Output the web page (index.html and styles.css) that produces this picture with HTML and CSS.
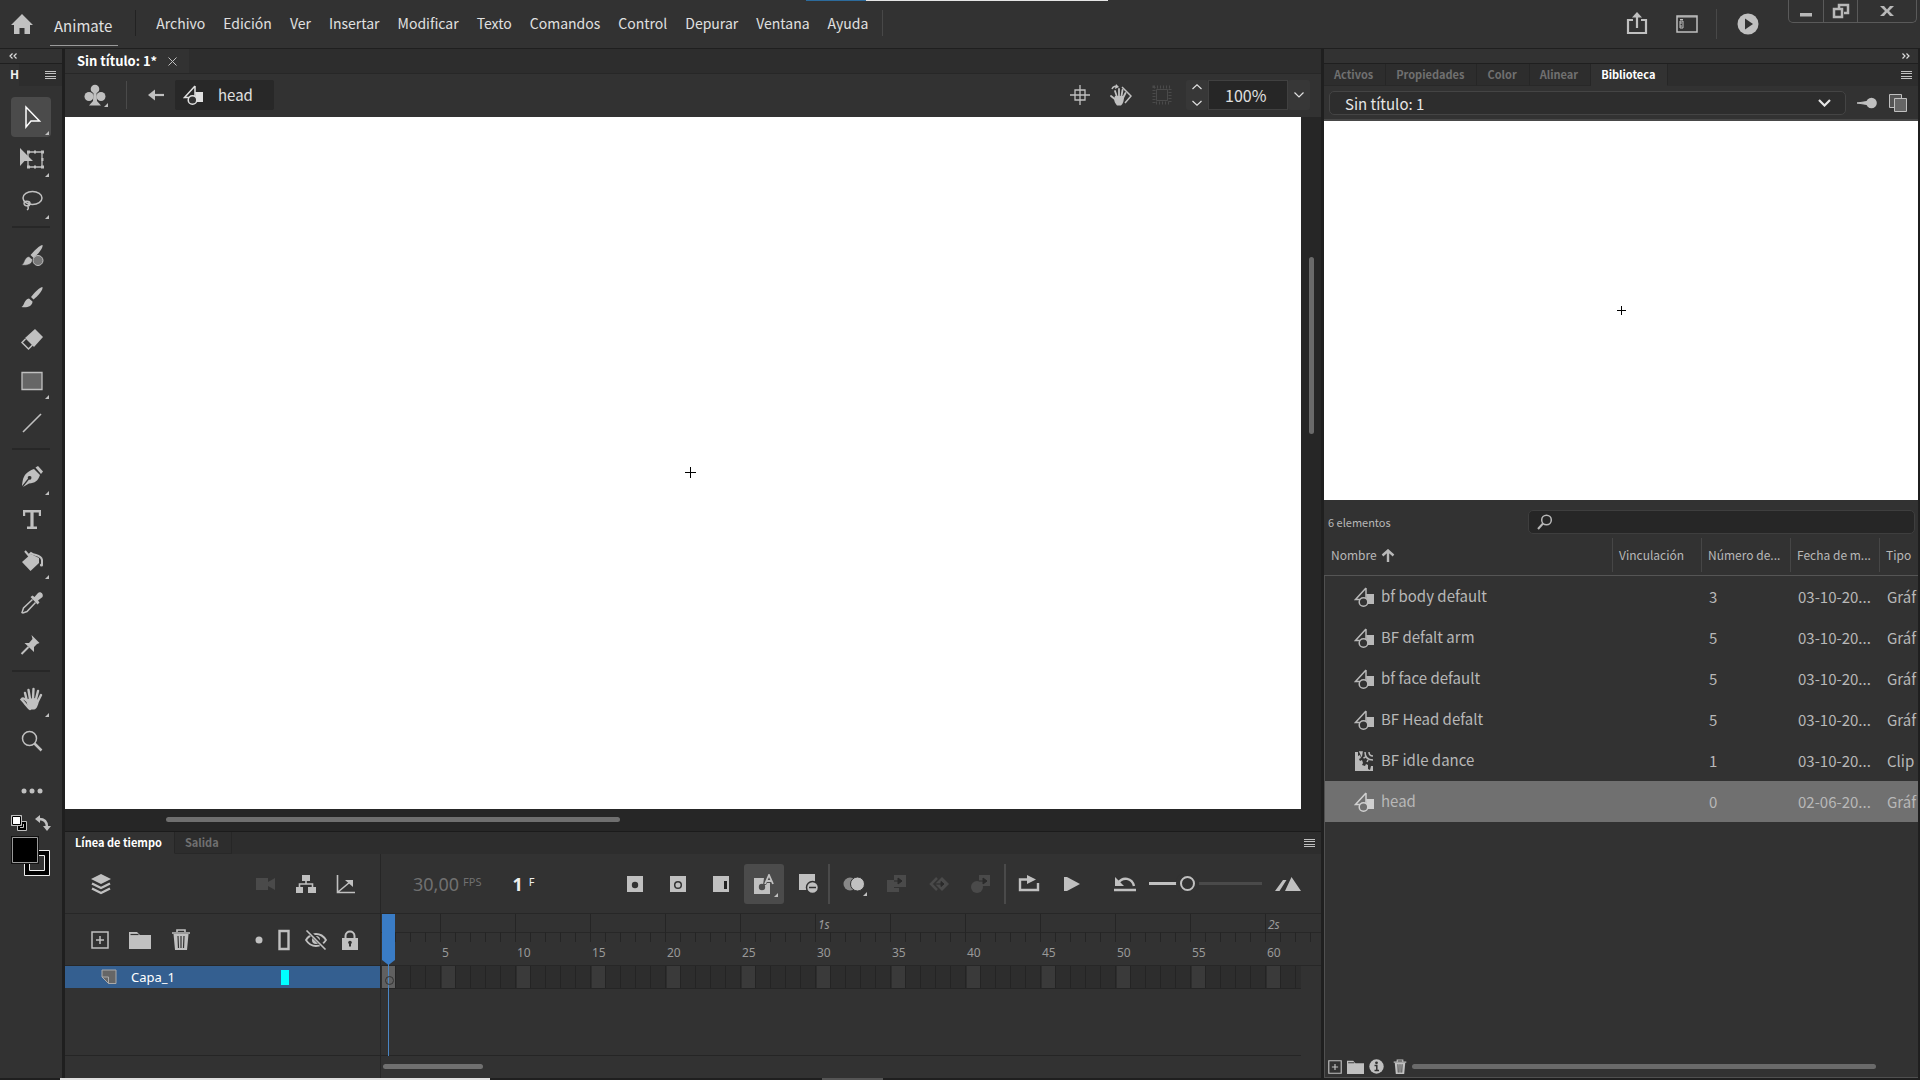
FILE: index.html
```html
<!DOCTYPE html>
<html lang="es">
<head>
    <meta charset="UTF-8">
    <meta name="viewport" content="width=device-width, initial-scale=1.0">
    <title>Animate - Sin título: 1*</title>
    <link rel="stylesheet" href="styles.css">
</head>
<body>
    <!-- shared icons -->
    <svg class="symbols" width="0" height="0" aria-hidden="true">
        <symbol id="i-graphic" viewBox="0 0 20 22">
            <path d="M12 2v11M12 2L1.500 13.500H6" fill="none" stroke="currentColor" stroke-width="1.500"/>
            <path d="M12 8h8v10h-6.500z" fill="currentColor"/>
            <circle class="hole" cx="9.500" cy="16" r="4.300" stroke="currentColor" stroke-width="1.500"/>
        </symbol>
        <symbol id="i-clip" viewBox="0 0 20 22">
            <path d="M1 2h3v4l2-1 1 3-2 1 1 2 2-1 1 3-1 2 3 1 1-2 2 1v4l2 1 1-4h2v5H1z" fill="currentColor"/>
            <path d="M6 2h2l-.5 3zM11 2c0 5 2 8 8 8M11.500 7l-2 1M14 10l-1 2M15 2c0 3 1 4 4 4" fill="none" stroke="currentColor" stroke-width="1.500"/>
        </symbol>
        <symbol id="i-menu" viewBox="0 0 11 8">
            <path d="M0 .5h11M0 2.500h11M0 5.500h11M0 7.500h11" stroke="currentColor"/>
        </symbol>
        <symbol id="i-add" viewBox="0 0 18 18">
            <path d="M1 1h16v16H1zM9 5v8M5 9h8" fill="none" stroke="currentColor" stroke-width="1.500"/>
        </symbol>
        <symbol id="i-folder" viewBox="0 0 22 18">
            <path d="M0 4V1h8l3 3h11v14H0z" fill="currentColor"/>
            <path d="M1.500 3.500h8" stroke="#323232" stroke-width="1.200"/>
        </symbol>
        <symbol id="i-trash" viewBox="0 0 20 22">
            <path d="M6 3V1h8v2M1 4h18" fill="none" stroke="currentColor" stroke-width="1.600"/>
            <path d="M2.500 5h15l-1.500 16H4z" fill="currentColor"/>
            <path d="M7 7l.5 12M10 7v12M13 7l-.5 12" stroke="#323232" stroke-width="1.200"/>
        </symbol>
    </svg>

    <div class="app">
        <header class="topbar">
            <span class="desktop-strip"></span>
            <button class="icon-btn home" aria-label="Inicio">
                <svg width="24" height="22" viewBox="0 0 24 22"><path d="M12 1l11 11h-3v9h-5.500v-6h-5v6H4v-9H1z" fill="currentColor"/></svg>
            </button>
            <a class="brand" href="#">Animate</a>
            <nav class="menu">
                <a href="#">Archivo</a>
                <a href="#">Edición</a>
                <a href="#">Ver</a>
                <a href="#">Insertar</a>
                <a href="#">Modificar</a>
                <a href="#">Texto</a>
                <a href="#">Comandos</a>
                <a href="#">Control</a>
                <a href="#">Depurar</a>
                <a href="#">Ventana</a>
                <a href="#">Ayuda</a>
            </nav>
            <div class="quick">
                <button class="icon-btn" aria-label="Compartir">
                    <svg width="22" height="24" viewBox="0 0 22 24"><path d="M7 8H2v13h18V8h-5M11 16V4" fill="none" stroke="currentColor" stroke-width="2.200"/><path d="M11 0l5 5.500H6z" fill="currentColor"/></svg>
                </button>
                <button class="icon-btn workspace" aria-label="Espacio de trabajo">
                    <svg width="22" height="18" viewBox="0 0 22 18"><path d="M1 1h20v16H1z" fill="none" stroke="currentColor" stroke-width="1.500"/><path d="M1 2h20M4 4.500h3M4 6h3v7H4zM4 8h2M4 11h2" fill="none" stroke="currentColor"/></svg>
                </button>
                <button class="icon-btn test" aria-label="Probar película">
                    <svg width="22" height="22" viewBox="0 0 22 22"><circle cx="11" cy="11" r="10.500" fill="currentColor"/><path d="M8 5.500v11l8-5.500z" fill="#323232"/></svg>
                </button>
            </div>
            <div class="window-controls">
                <button aria-label="Minimizar"><svg width="14" height="12" viewBox="0 0 14 12"><path d="M1 8h12v3.500H1z" fill="currentColor"/></svg></button>
                <button aria-label="Restaurar"><svg width="18" height="16" viewBox="0 0 18 16"><path d="M7 5V2h9v8h-4M2 6h8v8H2z" fill="none" stroke="currentColor" stroke-width="2.500"/></svg></button>
                <button class="close" aria-label="Cerrar"><svg width="14" height="12" viewBox="0 0 14 12"><path d="M0 1h4l3 3.500L10 1h4L9 6l5 5h-4L7 7.500 4 11H0l5-5z" fill="currentColor"/></svg></button>
            </div>
        </header>

        <aside class="tools">
            <div class="dock-bar">
                <svg width="8" height="6" viewBox="0 0 8 6"><path d="M3.500 .5L1 3l2.500 2.500M7.500 .5L5 3l2.500 2.500" fill="none" stroke="currentColor" stroke-width="1.200"/></svg>
            </div>
            <div class="tools-tab"><b>H</b><span><svg class="ic-menu"><use href="#i-menu"/></svg></span></div>
            <div class="tool-list">
                <button class="tool more active" aria-label="Selección"><svg viewBox="0 0 24 24"><path d="M6 2v20l5-6h8.500z" fill="none" stroke="#fff" stroke-width="1.500"/></svg></button>
                <button class="tool more" aria-label="Transformación libre"><svg viewBox="0 0 24 24"><path d="M8 5h14v15H8z" fill="none" stroke="currentColor" stroke-width="1.300"/><path d="M14 3.500h2v3h-2zM21 3.500h3v3h-3zM21 18.500h3v3h-3zM14 18.500h2v3h-2zM7 18.500h3v3H7zM21.500 11h2v3h-2zM7 3.500h3v3H7z" fill="currentColor"/><path d="M0 1v18l4.500-5H13z" fill="currentColor"/></svg></button>
                <button class="tool more" aria-label="Lazo"><svg viewBox="0 0 24 24"><ellipse cx="12.500" cy="9" rx="9.500" ry="6.500" fill="none" stroke="currentColor" stroke-width="1.500"/><path d="M4 14c1-3 6-2 5 1s-5 2-5-1 6-2 6 0-1 3-2 3 2 2-1 4" fill="none" stroke="currentColor" stroke-width="1.400"/></svg></button>
                <hr>
                <button class="tool" aria-label="Pincel fluido"><svg viewBox="0 0 24 24"><circle cx="18" cy="17.500" r="5" fill="#777" stroke="currentColor"/><path d="M22.500 2c.8 3-4.500 9-9 13l-3-3C14 8 20 2 22.500 2z" fill="currentColor"/><path d="M9 13.500l3.500 3c0 5-6 6.500-11 5.500 3-1 2.500-8 7.500-8.500z" fill="currentColor" stroke="#323232" stroke-width=".6"/></svg></button>
                <button class="tool" aria-label="Pincel clásico"><svg viewBox="0 0 24 24"><path d="M22.500 2c.8 3-4.500 9-9 12.500l-2.500-2.500C14 8 20 2 22.500 2z" fill="currentColor"/><path d="M9 13.500l3.500 3c0 5-6 6.500-11 5.500 3-1 2.500-8 7.500-8.500z" fill="currentColor"/></svg></button>
                <button class="tool" aria-label="Borrador"><svg viewBox="0 0 24 24"><path d="M15 2l8 8-9 10-9-9z" fill="currentColor"/><path d="M5.500 12L2 15.500 8.500 22l4-4" fill="none" stroke="currentColor" stroke-width="1.500"/></svg></button>
                <button class="tool more" aria-label="Rectángulo"><svg viewBox="0 0 24 24"><path d="M2 3.500h20v17H2z" fill="#666" stroke="currentColor" stroke-width="1.300"/></svg></button>
                <button class="tool" aria-label="Línea"><svg viewBox="0 0 24 24"><path d="M3 21L21 3" stroke="currentColor" stroke-width="1.600"/></svg></button>
                <hr>
                <button class="tool more" aria-label="Pluma"><svg viewBox="0 0 24 24"><path d="M15.500 2.500L18 1l5 5.500L21 9z" fill="currentColor"/><path d="M14 4l6 6c-2 6-5 8-11 8.500L3 22l6-7.500a1.800 1.800 0 1 0-1-1L2 21c1-5 0-13 12-17z" fill="currentColor"/></svg></button>
                <button class="tool" aria-label="Texto"><svg viewBox="0 0 24 24"><path d="M3 3h18v6h-2.200V5.500h-5.200v14H17V22H7v-2.500h3.400v-14H5.200V9H3z" fill="currentColor"/></svg></button>
                <button class="tool more" aria-label="Cubo de pintura"><svg viewBox="0 0 24 24"><path d="M2 13L11 5l8 4v5l-8.500 8z" fill="currentColor"/><path d="M5 2l5 6M9 6l2-2c4 3 10 1 11 7v5" fill="none" stroke="currentColor" stroke-width="2"/><circle cx="21.500" cy="16" r="1.600" fill="currentColor"/></svg></button>
                <button class="tool" aria-label="Cuentagotas"><svg viewBox="0 0 24 24"><path d="M12.500 8.500L3.500 17 2 21.500l1 .5 4-1.500 8.500-9" fill="none" stroke="currentColor" stroke-width="1.500"/><path d="M10.500 6l2-1.500 2 1.500L18 2c2.500-2 6 1 4.500 4L18 9.500l1.500 2-2 2z" fill="currentColor"/></svg></button>
                <button class="tool" aria-label="Deformación de posición libre"><svg viewBox="0 0 24 24"><path d="M11.500 2l8 8-2.500 1-3 3v5L4.500 10h4.500l3.500-4z" fill="currentColor"/><path d="M8.500 14L1.500 21" stroke="currentColor" stroke-width="2"/></svg></button>
                <hr>
                <button class="tool more" aria-label="Mano"><svg viewBox="0 0 24 24"><path d="M10 22c-2-1-5-6-8.500-9.500C3 10.500 5 12 7 14L5 6M10 12L8.500 3M13 12l.5-10M16 12l2-8M18 14l3-6" fill="none" stroke="currentColor" stroke-width="2.400" stroke-linecap="round"/><path d="M7 12l9-1 3 3c-1 4-2 8-5 8.500h-4C8 20 6 17 7 12z" fill="currentColor"/></svg></button>
                <button class="tool" aria-label="Zoom"><svg viewBox="0 0 24 24"><circle cx="9.500" cy="9.500" r="7" fill="none" stroke="currentColor" stroke-width="1.500"/><path d="M14.500 14.500l7 7" stroke="currentColor" stroke-width="2.500"/></svg></button>
                <button class="tool dots" aria-label="Editar barra de herramientas"><svg viewBox="0 0 24 24"><g fill="currentColor"><circle cx="4" cy="12" r="2.500"/><circle cx="12" cy="12" r="2.500"/><circle cx="20" cy="12" r="2.500"/></g></svg></button>
            </div>
            <div class="swatches">
                <button class="icon-btn" aria-label="Blanco y negro"><svg width="16" height="16" viewBox="0 0 16 16"><path d="M6.500 6.500h9v9h-9z" fill="#000" stroke="#c0c0c0"/><path d="M9 12.500h3.500V9" fill="none" stroke="#c0c0c0"/><path d="M.5 .5h10v10H.5z" fill="#fff" stroke="#c0c0c0"/><path d="M1.500 1.500h8v8h-8z" fill="none" stroke="#000"/></svg></button>
                <button class="icon-btn" aria-label="Intercambiar colores"><svg width="16" height="16" viewBox="0 0 16 16"><path d="M4 4c6 0 8 3 8 8" fill="none" stroke="currentColor" stroke-width="2.500"/><path d="M0 4l5-4v8zM8 11h8l-4 5z" fill="currentColor"/></svg></button>
                <button class="icon-btn colors" aria-label="Color de trazo y relleno"><svg width="40" height="42" viewBox="0 0 40 42"><path d="M13.500 14.500h25v25h-25z" fill="#000" stroke="#eee"/><path d="M18.500 19.500h15v15h-15z" fill="#323232" stroke="#eee"/><path d="M0 0h28v28H0z" fill="#111"/><path d="M1.500 1.500h25v25h-25z" fill="#000" stroke="#999"/></svg></button>
            </div>
        </aside>

        <main class="document">
            <div class="doc-tabs">
                <div class="doc-tab">Sin título: 1* <button class="icon-btn" aria-label="Cerrar documento"><svg width="9" height="9" viewBox="0 0 9 9"><path d="M.5 .5l8 8M8.500 .5l-8 8" stroke="currentColor"/></svg></button></div>
            </div>
            <div class="edit-bar">
                <button class="icon-btn symbol-btn more" aria-label="Editar símbolos"><svg width="22" height="22" viewBox="0 0 22 22"><g fill="currentColor"><circle cx="11" cy="5" r="4.300"/><circle cx="5" cy="12.500" r="4.500"/><circle cx="17" cy="12.500" r="4.500"/><path d="M9.500 9h3l.5 8 4 4.500H5L9 17z"/></g></svg></button>
                <button class="icon-btn back" aria-label="Atrás"><svg width="16" height="12" viewBox="0 0 16 12"><path d="M4 6h12" stroke="currentColor" stroke-width="2.200"/><path d="M0 6l7-5.500v11z" fill="currentColor"/></svg></button>
                <a class="crumb" href="#"><svg class="ic-symbol"><use href="#i-graphic"/></svg>head</a>
                <div class="view-tools">
                    <button class="icon-btn" aria-label="Centrar escenario"><svg width="20" height="20" viewBox="0 0 20 20"><path d="M5 5h10v10H5zM10 0v20M0 10h20" fill="none" stroke="currentColor" stroke-width="1.300"/></svg></button>
                    <button class="icon-btn" aria-label="Herramienta de rotación"><svg width="22" height="22" viewBox="0 0 22 22"><path d="M2 5c1-3 4-3 5-2" fill="none" stroke="currentColor" stroke-width="1.500"/><path d="M6 0l3 3-4 2z" fill="currentColor"/><path d="M12 3l9 9-6 7" fill="none" stroke="currentColor" stroke-width="1.500"/><path d="M7 13L5 7M9 12V5M11.500 12l1-6M13 14l2.500-5M6 16l-5-4" stroke="currentColor" stroke-width="1.800" stroke-linecap="round"/><path d="M5 12h9c0 5-1 8-3 9.500H7C5 19 3 16 5 12z" fill="currentColor"/></svg></button>
                    <button class="icon-btn faint" aria-label="Recortar contenido"><svg width="20" height="20" viewBox="0 0 20 20"><path d="M2 2h16v16H2z" fill="none" stroke="currentColor" stroke-width="3" stroke-dasharray="1 2"/><path d="M4.500 4.500h11v11h-11z" fill="none" stroke="currentColor"/></svg></button>
                    <div class="zoom">
                        <button class="spin" aria-label="Cambiar zoom"><svg width="10" height="22" viewBox="0 0 10 22"><path d="M.5 5L5 .8 9.500 5M.5 17L5 21.200 9.500 17" fill="none" stroke="currentColor" stroke-width="1.200"/></svg></button>
                        <input type="text" value="100%" aria-label="Zoom">
                        <button class="spin" aria-label="Opciones de zoom"><svg width="10" height="6" viewBox="0 0 10 6"><path d="M.5 .5L5 5 9.500 .5" fill="none" stroke="currentColor" stroke-width="1.200"/></svg></button>
                    </div>
                </div>
            </div>
            <div class="stage-area">
                <div class="stage"><svg class="origin" width="11" height="11" viewBox="0 0 11 11"><path d="M5.500 0v11M0 5.500h11" stroke="#000"/></svg></div>
                <div class="scroll-v"><span></span></div>
                <div class="scroll-h"><span></span></div>
            </div>

            <section class="timeline">
                <div class="tabs">
                    <button class="tab active">Línea de tiempo</button>
                    <button class="tab">Salida</button>
                    <button class="icon-btn panel-menu" aria-label="Menú del panel"><svg class="ic-menu"><use href="#i-menu"/></svg></button>
                </div>
                <div class="timeline-body">
                    <div class="layers">
                        <div class="layer-tools">
                            <button class="icon-btn" aria-label="Capas"><svg width="20" height="22" viewBox="0 0 20 22"><path d="M10 1l10 5-10 5L0 6z" fill="currentColor"/><path d="M1 10.500l9 4.500 9-4.500M1 15.500l9 4.500 9-4.500" fill="none" stroke="currentColor" stroke-width="2.400"/></svg></button>
                            <button class="icon-btn faint push" aria-label="Cámara"><svg width="20" height="14" viewBox="0 0 20 14"><path d="M0 1h12v4l7-4v12l-7-4v4H0z" fill="currentColor"/></svg></button>
                            <button class="icon-btn" aria-label="Vista principal"><svg width="20" height="18" viewBox="0 0 20 18"><path d="M6 0h8v6H6zM0 12h7v6H0zM12 12h8v6h-8z" fill="currentColor"/><path d="M10 5v4M3.500 13V9h13v4" fill="none" stroke="currentColor" stroke-width="1.600"/></svg></button>
                            <button class="icon-btn" aria-label="Profundidad de capa"><svg width="20" height="20" viewBox="0 0 20 20"><path d="M1.500 1v17.500H19M2 18L14 8" fill="none" stroke="currentColor" stroke-width="1.600"/><path d="M9 6h8v7z" fill="currentColor"/></svg></button>
                        </div>
                        <div class="layer-head">
                            <button class="icon-btn" aria-label="Nueva capa"><svg class="ic-add"><use href="#i-add"/></svg></button>
                            <button class="icon-btn" aria-label="Nueva carpeta"><svg class="ic-folder"><use href="#i-folder"/></svg></button>
                            <button class="icon-btn" aria-label="Eliminar"><svg class="ic-trash"><use href="#i-trash"/></svg></button>
                            <div class="layer-flags">
                                <button class="icon-btn" aria-label="Resaltar"><svg width="8" height="8" viewBox="0 0 8 8"><circle cx="4" cy="4" r="3.500" fill="currentColor"/></svg></button>
                                <button class="icon-btn" aria-label="Contornos"><svg width="12" height="22" viewBox="0 0 12 22"><path d="M1.500 2h9v18h-9z" fill="none" stroke="currentColor" stroke-width="2.400"/></svg></button>
                                <button class="icon-btn" aria-label="Ocultar"><svg width="22" height="20" viewBox="0 0 22 20"><path d="M1 10c5-8 15-8 20 0-5 8-15 8-20 0z" fill="none" stroke="currentColor" stroke-width="1.800"/><circle cx="11" cy="10" r="4" fill="currentColor"/><path d="M2 0l19 19" stroke="#323232" stroke-width="4"/><path d="M1.500 .5l19 19" stroke="currentColor" stroke-width="1.600"/></svg></button>
                                <button class="icon-btn" aria-label="Bloquear"><svg width="16" height="20" viewBox="0 0 16 20"><path d="M3.500 10V6c0-6 9-6 9 0v4" fill="none" stroke="currentColor" stroke-width="2"/><path d="M0 8h16v12H0z" fill="currentColor"/><path d="M8 11.500v5" stroke="#323232" stroke-width="2"/><circle cx="8" cy="12.500" r="1.800" fill="#323232"/></svg></button>
                            </div>
                        </div>
                        <div class="layer">
                            <svg width="16" height="16" viewBox="0 0 16 16"><path d="M1 1h14v13.500H7.500L1 8z" fill="#666" stroke="#aaa"/><path d="M1 8h6.500v6.500" fill="none" stroke="#aaa"/></svg>
                            <span>Capa_1</span>
                            <i class="layer-color"></i>
                        </div>
                        <div class="layer-foot"></div>
                    </div>

                    <div class="frames">
                        <div class="frame-tools">
                            <span class="fps">30,00<sup>FPS</sup></span>
                            <span class="current">1<sup>F</sup></span>
                            <div class="key-tools">
                                <button class="icon-btn" aria-label="Fotograma clave"><svg width="16" height="16" viewBox="0 0 16 16"><path d="M0 0h16v16H0z" fill="currentColor"/><circle cx="8" cy="9" r="3.200" fill="#323232"/></svg></button>
                                <button class="icon-btn" aria-label="Fotograma clave vacío"><svg width="16" height="16" viewBox="0 0 16 16"><path d="M0 0h16v16H0z" fill="currentColor"/><circle cx="8" cy="9" r="3.300" fill="none" stroke="#323232" stroke-width="1.500"/></svg></button>
                                <button class="icon-btn" aria-label="Fotograma"><svg width="16" height="16" viewBox="0 0 16 16"><path d="M0 0h16v16H0z" fill="currentColor"/><path d="M11 5h3v8h-3z" fill="#222"/></svg></button>
                                <button class="icon-btn auto more" aria-label="Fotograma clave automático"><svg width="20" height="20" viewBox="0 0 20 20"><path d="M0 4h10l-1 7h3l1-2h3v11H0z" fill="currentColor"/><circle cx="8" cy="13" r="3.200" fill="#4b4b4b"/><path d="M11 10l4-9 4 9M12.500 7h5" fill="none" stroke="currentColor" stroke-width="1.800"/></svg></button>
                                <button class="icon-btn" aria-label="Quitar fotogramas"><svg width="20" height="20" viewBox="0 0 20 20"><path d="M0 0h16v16H0z" fill="currentColor"/><circle cx="13.500" cy="13.500" r="6" fill="currentColor" stroke="#323232" stroke-width="1.500"/><path d="M10 13.500h7" stroke="#323232" stroke-width="1.500"/></svg></button>
                            </div>
                            <div class="tween-tools">
                                <button class="icon-btn more" aria-label="Papel cebolla"><svg width="22" height="14" viewBox="0 0 22 14"><circle cx="7" cy="7" r="6.500" fill="#888"/><circle cx="14.500" cy="7" r="7" fill="currentColor" stroke="#323232"/></svg></button>
                                <button class="icon-btn faint" aria-label="Interpolación clásica"><svg width="20" height="18" viewBox="0 0 20 18"><path d="M7 0h12v12H7zM0 5h7v8h5v4H0z" fill="currentColor"/><path d="M7 6h6M11 3l4 3-4 3z" stroke="#2a2a2a" fill="#2a2a2a"/></svg></button>
                                <button class="icon-btn faint" aria-label="Interpolación de movimiento"><svg width="20" height="14" viewBox="0 0 20 14"><path d="M13 0l7 7-7 7-7-7z" fill="currentColor"/><path d="M8 1L2 7l6 6" fill="none" stroke="currentColor" stroke-width="2.500"/><path d="M6 7h7M12 4.500l3 2.500-3 2.500z" stroke="#2a2a2a" fill="#2a2a2a"/></svg></button>
                                <button class="icon-btn faint" aria-label="Interpolación de forma"><svg width="20" height="18" viewBox="0 0 20 18"><circle cx="6" cy="12" r="6" fill="currentColor"/><path d="M8 0h11v11H8z" fill="currentColor"/><path d="M8 6h6M12 3l4 3-4 3z" stroke="#2a2a2a" fill="#2a2a2a"/></svg></button>
                            </div>
                            <div class="play-tools">
                                <button class="icon-btn" aria-label="Bucle"><svg width="22" height="18" viewBox="0 0 22 18"><path d="M10 4.500H2V15h18V8" fill="none" stroke="currentColor" stroke-width="2.400"/><path d="M9 0l9 4.500L9 9z" fill="currentColor"/></svg></button>
                                <button class="icon-btn" aria-label="Reproducir"><svg width="16" height="16" viewBox="0 0 16 16"><path d="M0 1h3l13 7-13 7H0z" fill="currentColor"/></svg></button>
                            </div>
                            <div class="zoom-tools">
                                <button class="icon-btn" aria-label="Restablecer zoom"><svg width="22" height="16" viewBox="0 0 22 16"><path d="M0 14h22M4 7c5-7 14-5 16 3" fill="none" stroke="currentColor" stroke-width="2.400"/><path d="M1 1v9h9z" fill="currentColor"/></svg></button>
                                <input type="range" min="0" max="100" value="32" aria-label="Zoom de la línea de tiempo">
                                <button class="icon-btn" aria-label="Ampliar línea de tiempo"><svg width="26" height="14" viewBox="0 0 26 14"><path d="M16.500 0L26 14H10zM0 14L8 3h3.500L4.500 14z" fill="currentColor"/></svg></button>
                            </div>
                        </div>
                        <div class="ruler">
                            <div class="mark first"></div>
                            <div class="mark"><em></em><b>5</b></div>
                            <div class="mark"><em></em><b>10</b></div>
                            <div class="mark"><em></em><b>15</b></div>
                            <div class="mark"><em></em><b>20</b></div>
                            <div class="mark"><em></em><b>25</b></div>
                            <div class="mark"><em>1s</em><b>30</b></div>
                            <div class="mark"><em></em><b>35</b></div>
                            <div class="mark"><em></em><b>40</b></div>
                            <div class="mark"><em></em><b>45</b></div>
                            <div class="mark"><em></em><b>50</b></div>
                            <div class="mark"><em></em><b>55</b></div>
                            <div class="mark last"><em>2s</em><b>60</b></div>
                        </div>
                        <div class="track"></div>
                        <div class="track-rest"></div>
                        <div class="track-scroll"><span></span></div>
                        <div class="playhead"><svg width="13" height="51" viewBox="0 0 13 51"><path d="M0 0h13v46l-6.500 5L0 46z" fill="#3a7cc5"/></svg></div>
                    </div>
                </div>
            </section>
        </main>

        <aside class="library">
            <div class="dock-bar right">
                <svg width="8" height="6" viewBox="0 0 8 6"><path d="M.5 .5L3 3 .5 5.500M4.500 .5L7 3 4.500 5.500" fill="none" stroke="currentColor" stroke-width="1.200"/></svg>
            </div>
            <div class="tabs">
                <button class="tab">Activos</button>
                <button class="tab">Propiedades</button>
                <button class="tab">Color</button>
                <button class="tab">Alinear</button>
                <button class="tab active">Biblioteca</button>
                <button class="icon-btn panel-menu" aria-label="Menú del panel"><svg class="ic-menu"><use href="#i-menu"/></svg></button>
            </div>
            <div class="doc-select">
                <div class="select-box">
                    <select aria-label="Documento"><option>Sin título: 1</option></select>
                    <svg width="13" height="8" viewBox="0 0 13 8"><path d="M1 1l5.500 5.500L12 1" fill="none" stroke="currentColor" stroke-width="2.200"/></svg>
                </div>
                <button class="icon-btn" aria-label="Fijar biblioteca"><svg width="20" height="12" viewBox="0 0 20 12"><path d="M0 6l10-1.500v3z" fill="currentColor" stroke="currentColor"/><circle cx="14.500" cy="6" r="5.300" fill="currentColor"/><path d="M9 4h2v4H9z" fill="currentColor"/></svg></button>
                <button class="icon-btn" aria-label="Nuevo panel de biblioteca"><svg width="20" height="20" viewBox="0 0 20 20"><path d="M1.500 1.500h12v13h-12z" fill="#555" stroke="currentColor"/><path d="M6.500 5.500h12v13h-12z" fill="#666" stroke="currentColor"/></svg></button>
            </div>
            <div class="preview"><svg width="9" height="9" viewBox="0 0 9 9"><path d="M4.500 0v9M0 4.500h9" stroke="#000"/></svg></div>
            <div class="search-row">
                <span>6 elementos</span>
                <label class="search">
                    <svg width="16" height="16" viewBox="0 0 16 16"><circle cx="9.500" cy="6" r="4.800" fill="none" stroke="currentColor" stroke-width="1.500"/><path d="M6 9.500L1 15" stroke="currentColor" stroke-width="2"/></svg>
                    <input type="text" aria-label="Buscar">
                </label>
            </div>
            <table class="items">
                <colgroup><col><col class="c"><col class="c"><col class="c"><col class="c-type"></colgroup>
                <thead>
                    <tr>
                        <th><span>Nombre <svg width="14" height="13" viewBox="0 0 14 13"><path d="M7 13V2M1.500 6.500L7 1.500l5.500 5" fill="none" stroke="currentColor" stroke-width="2.400"/></svg></span></th>
                        <th><span>Vinculación</span></th>
                        <th><span>Número de...</span></th>
                        <th><span>Fecha de m...</span></th>
                        <th><span>Tipo</span></th>
                    </tr>
                </thead>
                <tbody>
                    <tr><td><svg class="ic-symbol"><use href="#i-graphic"/></svg>bf body default</td><td></td><td>3</td><td>03-10-20...</td><td>Gráf</td></tr>
                    <tr><td><svg class="ic-symbol"><use href="#i-graphic"/></svg>BF defalt arm</td><td></td><td>5</td><td>03-10-20...</td><td>Gráf</td></tr>
                    <tr><td><svg class="ic-symbol"><use href="#i-graphic"/></svg>bf face default</td><td></td><td>5</td><td>03-10-20...</td><td>Gráf</td></tr>
                    <tr><td><svg class="ic-symbol"><use href="#i-graphic"/></svg>BF Head defalt</td><td></td><td>5</td><td>03-10-20...</td><td>Gráf</td></tr>
                    <tr><td><svg class="ic-symbol"><use href="#i-clip"/></svg>BF idle dance</td><td></td><td>1</td><td>03-10-20...</td><td>Clip</td></tr>
                    <tr class="selected"><td><svg class="ic-symbol"><use href="#i-graphic"/></svg>head</td><td></td><td>0</td><td>02-06-20...</td><td>Gráf</td></tr>
                </tbody>
            </table>
            <div class="library-rest"></div>
            <div class="library-foot">
                <button class="icon-btn" aria-label="Nuevo símbolo"><svg width="14" height="14"><use href="#i-add"/></svg></button>
                <button class="icon-btn" aria-label="Nueva carpeta"><svg width="17" height="14"><use href="#i-folder"/></svg></button>
                <button class="icon-btn" aria-label="Propiedades"><svg width="15" height="15" viewBox="0 0 15 15"><circle cx="7.500" cy="7.500" r="7.200" fill="currentColor"/><circle cx="7.500" cy="3.800" r="1.400" fill="#323232"/><path d="M5.500 6.500h2.300v5M5.500 11.500h4.500" fill="none" stroke="#323232" stroke-width="1.500"/></svg></button>
                <button class="icon-btn" aria-label="Eliminar"><svg width="14" height="16"><use href="#i-trash"/></svg></button>
                <div class="foot-scroll"><span></span></div>
            </div>
        </aside>

        <footer class="taskbar"><span class="strip-light"></span><span class="strip-grey"></span></footer>
    </div>
</body>
</html>
```

FILE: styles.css
```css
* {
    box-sizing: border-box;
}
body {
    margin: 0;
    background: #1f1f1f;
    color: #e0e0e0;
    font-family: "Noto Sans CJK SC", "Noto Sans", sans-serif;
    font-size: 15px;
    line-height: 20px;
}
a {
    color: inherit;
    text-decoration: none;
}
button, input, select {
    font: inherit;
    color: inherit;
    border: none;
    background: none;
    padding: 0;
    margin: 0;
    outline: none;
}
svg {
    display: block;
    flex: none;
}
.symbols {
    position: absolute;
}
.app {
    display: grid;
    grid-template-columns: 62px minmax(0, 1fr) 596px;
    grid-template-rows: 48px minmax(0, 1fr) 2px;
    column-gap: 3px;
    height: 100vh;
    overflow: hidden;
}
.icon-btn {
    display: flex;
    align-items: center;
    justify-content: center;
    flex: none;
    color: #c0c0c0;
}
.faint {
    color: #4a4a4a;
}
.ic-menu {
    width: 11px;
    height: 8px;
}
.ic-symbol {
    width: 20px;
    height: 22px;
}
.hole {
    fill: var(--hole, #323232);
}
/* corner mark on buttons that open a group */
.more {
    position: relative;
}
.more::after {
    content: "";
    position: absolute;
    right: 2px;
    bottom: 2px;
    border: 2px solid transparent;
    border-right-color: #c0c0c0;
    border-bottom-color: #c0c0c0;
}

/* top bar */
.topbar {
    grid-column: 1 / -1;
    position: relative;
    display: flex;
    align-items: center;
    background: #323232;
}
.desktop-strip {
    position: absolute;
    top: 0;
    left: 42%;
    width: 302px;
    height: 1px;
    background: linear-gradient(90deg, #2c6b9c 60px, #e6e6e6 60px);
}
.home {
    margin-left: 10px;
}
.brand {
    margin-left: 16px;
    padding: 13px 6px 9px 4px;
    border-bottom: 1px solid #9a9a9a;
}
.menu {
    display: flex;
    align-items: center;
    height: 26px;
    margin: 0 0 2px 17px;
    padding: 0 5px 0 11px;
    border-left: 1px solid #222;
    border-right: 1px solid #484848;
    font-size: 14px;
}
.menu a {
    padding: 0 9px;
}
.quick {
    display: flex;
    align-items: center;
    margin-left: auto;
    margin-right: 29px;
}
.workspace {
    margin-left: 28px;
}
.test {
    height: 30px;
    margin-left: 18px;
    padding-left: 20px;
    border-left: 1px solid #484848;
}
.window-controls {
    align-self: flex-start;
    display: flex;
    height: 23px;
    margin-right: 3px;
    border: 1px solid #5a5a5a;
    border-top: none;
    border-radius: 0 0 5px 5px;
}
.window-controls button {
    display: flex;
    align-items: center;
    justify-content: center;
    width: 34px;
    color: #b8b8b8;
}
.window-controls button + button {
    border-left: 1px solid #5a5a5a;
}
.window-controls .close {
    width: 59px;
}

/* tools */
.tools, .library, .document {
    margin-top: 1px;
    display: flex;
    flex-direction: column;
    min-height: 0;
}
.tools {
    background: #323232;
}
.dock-bar {
    display: flex;
    align-items: center;
    height: 15px;
    flex: none;
    padding: 0 9px;
    background: #323232;
    border-bottom: 1px solid #1f1f1f;
    color: #ddd;
}
.dock-bar.right {
    justify-content: flex-end;
    padding: 0 8px;
}
.tools-tab {
    display: flex;
    height: 22px;
    padding-left: 10px;
    font-size: 12px;
    color: #f0f0f0;
}
.tools-tab span {
    display: flex;
    flex: 1;
    align-items: center;
    justify-content: flex-end;
    padding-right: 6px;
    background: #2d2d2d;
    color: #c0c0c0;
}
.tool-list {
    display: flex;
    flex-direction: column;
    align-items: center;
    gap: 2px;
    padding-top: 11px;
}
.tool {
    display: flex;
    align-items: center;
    justify-content: center;
    width: 40px;
    height: 40px;
    padding-left: 2px;
    border-radius: 4px;
    color: #c0c0c0;
}
.tool svg {
    width: 24px;
    height: 24px;
}
.tool.active {
    background: #4b4b4b;
}
.tool-list hr {
    width: 38px;
    height: 10px;
    margin: 0;
    border: none;
    background: linear-gradient(#272727, #272727) 0 3px / 100% 2px no-repeat;
}
.dots {
    margin-top: 8px;
}
.swatches {
    display: grid;
    grid-template-columns: 16px 16px;
    column-gap: 8px;
    row-gap: 5px;
    margin: 4px 0 0 11px;
}
.colors {
    grid-column: 1 / -1;
}

/* document */
.document {
    background: #262626;
}
.doc-tabs {
    display: flex;
    height: 25px;
    flex: none;
    background: #2d2d2d;
    border-bottom: 1px solid #272727;
}
.doc-tab {
    display: flex;
    align-items: center;
    gap: 11px;
    padding: 0 12px;
    background: #323232;
    color: #fff;
    font-size: 13px;
    font-weight: 700;
}
.edit-bar {
    display: flex;
    align-items: center;
    height: 43px;
    flex: none;
    padding: 0 11px 2px 19px;
    background: #323232;
}
.symbol-btn {
    width: 43px;
    height: 28px;
    justify-content: flex-start;
    border-right: 1px solid #4a4a4a;
}
.symbol-btn::after {
    right: 18px;
}
.back {
    margin: 0 11px 0 21px;
}
.crumb {
    display: flex;
    align-items: center;
    gap: 15px;
    height: 30px;
    padding: 0 21px 0 8px;
    background: #282828;
    border-radius: 2px;
}
.view-tools {
    display: flex;
    align-items: center;
    gap: 20px;
    margin-left: auto;
}
.zoom {
    display: flex;
    height: 30px;
    margin-left: -6px;
}
.spin {
    display: flex;
    align-items: center;
    justify-content: center;
    width: 22px;
    background: #373737;
    border-radius: 3px;
}
.zoom input {
    width: 80px;
    padding-left: 16px;
    background: #262626;
    border: 1px solid #404040;
    font-size: 16px;
}
.stage-area {
    flex: 1;
    display: grid;
    grid-template-columns: minmax(0, 1fr) 20px;
    grid-template-rows: minmax(0, 1fr) 22px;
}
.stage {
    position: relative;
    background: #fff;
}
.origin {
    position: absolute;
    left: 50.2%;
    top: 50.6%;
}
.scroll-v {
    display: flex;
    flex-direction: column;
    align-items: center;
    padding-top: 140px;
}
.scroll-v span {
    width: 5px;
    height: 32%;
    flex: none;
    border-radius: 3px;
    background: #6a6a6a;
}
.scroll-h {
    padding: 8px 0 0 101px;
}
.scroll-h span {
    display: block;
    width: 40%;
    height: 5px;
    border-radius: 3px;
    background: #6f6f6f;
}

/* panel tabs */
.tabs {
    display: flex;
    height: 22px;
    flex: none;
    background: #2d2d2d;
}
.tab {
    padding: 0 12px 3px 10px;
    border-right: 1px solid #262626;
    border-bottom: 1px solid #282828;
    color: #707070;
    font-size: 11px;
    font-weight: 700;
}
.tab.active {
    background: #323232;
    border-bottom-color: #323232;
    color: #fff;
}
.panel-menu {
    margin-left: auto;
    padding-right: 6px;
}

/* timeline */
.timeline {
    flex: none;
    height: 247px;
    display: flex;
    flex-direction: column;
    border-top: 1px solid #1b1b1b;
    background: #323232;
}
.timeline-body {
    flex: 1;
    display: grid;
    grid-template-columns: 316px minmax(0, 1fr);
    font-family: "Noto Sans", sans-serif;
}
.layers, .frames {
    display: flex;
    flex-direction: column;
}
.layers {
    border-right: 1px solid #262626;
}
.layer-tools {
    display: flex;
    align-items: center;
    gap: 20px;
    height: 60px;
    padding: 0 24px 0 26px;
    border-bottom: 1px solid #272727;
}
.push {
    margin-left: auto;
}
.layer-head {
    display: flex;
    align-items: center;
    gap: 20px;
    height: 52px;
    padding: 0 22px 0 26px;
    border-bottom: 1px solid #272727;
}
.ic-add {
    width: 18px;
    height: 18px;
}
.ic-folder {
    width: 22px;
    height: 18px;
}
.ic-trash {
    width: 20px;
    height: 22px;
}
.layer-flags {
    display: flex;
    align-items: center;
    gap: 15px;
    margin-left: auto;
}
.layer {
    display: flex;
    align-items: center;
    height: 22px;
    padding: 0 91px 0 36px;
    background: #345f90;
    color: #fff;
    font-size: 13px;
}
.layer span {
    margin-left: 14px;
}
.layer-color {
    width: 8px;
    height: 15px;
    margin-left: auto;
    background: #0ff;
}
.layer-foot {
    flex: 1;
    margin-bottom: 22px;
    border-bottom: 1px solid #252525;
}
.frames {
    position: relative;
}
.frame-tools {
    display: flex;
    align-items: center;
    height: 60px;
    padding-right: 20px;
    border-bottom: 1px solid #272727;
}
.fps, .current {
    font-size: 18px;
}
.frame-tools sup {
    margin-left: 4px;
    font-size: 11px;
    font-weight: 400;
    line-height: 11px;
    vertical-align: 5px;
}
.fps {
    margin-left: 32px;
    color: #707070;
}
.current {
    margin-left: 31px;
    color: #eee;
    font-weight: 700;
}
.current sup {
    margin-left: 6px;
}
.key-tools, .tween-tools, .play-tools, .zoom-tools {
    display: flex;
    align-items: center;
}
.key-tools {
    gap: 27px;
    margin-left: auto;
    padding-right: 9px;
}
.auto {
    width: 40px;
    height: 40px;
    margin: 0 -12px;
    border-radius: 3px;
    background: #4b4b4b;
}
.auto::after {
    right: 6px;
    bottom: 7px;
}
.tween-tools {
    gap: 22px;
    height: 40px;
    padding: 0 13px;
    border-left: 2px solid #4a4a4a;
    border-right: 2px solid #4a4a4a;
}
.tween-tools .more::after {
    right: -2px;
    bottom: -5px;
}
.play-tools {
    gap: 24px;
    margin-left: 12px;
}
.zoom-tools {
    gap: 13px;
    margin-left: 34px;
}
.zoom-tools input {
    width: 113px;
    height: 16px;
    appearance: none;
}
.zoom-tools input::-webkit-slider-runnable-track {
    height: 3px;
    background: linear-gradient(90deg, #c0c0c0 32%, #4a4a4a 32%);
}
.zoom-tools input::-webkit-slider-thumb {
    appearance: none;
    width: 15px;
    height: 15px;
    margin-top: -6px;
    border: 2px solid #c0c0c0;
    border-radius: 50%;
    background: #323232;
    box-shadow: 0 0 0 4px #323232;
}
.ruler {
    display: flex;
    height: 52px;
    flex: none;
    overflow: hidden;
    border-bottom: 1px solid #272727;
    background: linear-gradient(#272727, #272727) 0 18px / 100% 1px no-repeat;
}
.mark {
    display: flex;
    flex-direction: column;
    width: 75px;
    flex: none;
    padding-left: 2px;
    font-size: 12px;
    color: #999;
    background:
        linear-gradient(#252525, #252525) 0 0 / 1px 28px no-repeat,
        repeating-linear-gradient(90deg, #252525 0 1px, transparent 1px 15px) 0 18px / 100% 10px no-repeat;
}
.mark.first {
    width: 59px;
    background: repeating-linear-gradient(90deg, transparent 0 14px, #252525 14px 15px) 0 18px / 100% 10px no-repeat;
}
.mark.last {
    width: 46px;
}
.mark em {
    height: 29px;
    padding: 1px 0 0 1px;
}
.mark b {
    font-weight: 400;
}
/* one cell is 15px wide, every fifth is lighter */
.track {
    height: 23px;
    margin-right: 20px;
    border-bottom: 1px solid #252525;
    background:
        linear-gradient(#606060, #606060) 1px 0 / 13px 100% no-repeat,
        repeating-linear-gradient(90deg, transparent 0 61px, #3a3a3a 61px 74px, transparent 74px 75px),
        repeating-linear-gradient(90deg, #2d2d2d 0 14px, #242424 14px 15px);
}
.track-rest {
    flex: 1;
    margin-right: 20px;
    border-bottom: 1px solid #252525;
}
.track-scroll {
    height: 22px;
    padding: 8px 0 0 2px;
}
.track-scroll span {
    display: block;
    width: 100px;
    height: 5px;
    border-radius: 3px;
    background: #707070;
}
.playhead {
    position: absolute;
    top: 60px;
    left: 1px;
    bottom: 22px;
    width: 13px;
    background: linear-gradient(#4a86c4, #4a86c4) 6px 0 / 1px 100% no-repeat;
}
.playhead::after {
    content: "";
    position: absolute;
    top: 62px;
    left: 3px;
    width: 7px;
    height: 7px;
    border: 1px solid #333;
    border-radius: 50%;
}

/* library */
.library {
    background: #323232;
    margin-right: 2px;
    color: #b8b8b8;
}
.doc-select {
    display: flex;
    align-items: center;
    gap: 11px;
    height: 35px;
    flex: none;
    padding: 1px 10px 0 5px;
    border-bottom: 2px solid #484848;
}
.select-box {
    position: relative;
    flex: 1;
    color: #e6e6e6;
}
.select-box select {
    width: 100%;
    height: 24px;
    padding: 2px 0 0 15px;
    appearance: none;
    border: 1px solid #444;
    border-radius: 5px;
    background: #2d2d2d;
}
.select-box svg {
    position: absolute;
    right: 15px;
    top: 8px;
    pointer-events: none;
}
.preview {
    display: flex;
    align-items: center;
    justify-content: center;
    height: 379px;
    flex: none;
    background: #fff;
}
.search-row {
    display: flex;
    align-items: center;
    height: 38px;
    flex: none;
    padding: 5px 3px 0 4px;
    font-size: 11px;
}
.search {
    display: flex;
    align-items: center;
    width: 66%;
    height: 24px;
    margin-left: auto;
    padding-left: 8px;
    border: 1px solid #3e3e3e;
    border-radius: 5px;
    background: #262626;
}
.search input {
    flex: 1;
    min-width: 0;
    margin-left: 6px;
}
.items {
    width: 100%;
    table-layout: fixed;
    border-collapse: separate;
    border-spacing: 0;
}
.items .c {
    width: 89px;
}
.items .c-type {
    width: 39px;
}
.items th {
    height: 38px;
    padding: 0 0 3px;
    border-bottom: 1px solid #555;
    font-size: 12px;
    font-weight: 400;
    text-align: left;
    white-space: nowrap;
}
.items th span {
    display: flex;
    align-items: center;
    gap: 4px;
    height: 34px;
    padding-left: 6px;
    border-left: 1px solid #464646;
}
.items th:first-child span {
    border-left: none;
    padding-left: 7px;
}
.items td {
    height: 41px;
    padding: 0 0 0 8px;
    overflow: hidden;
    white-space: nowrap;
}
.items td:first-child {
    padding-left: 56px;
    border-left: 1px solid #505050;
}
.items td .ic-symbol {
    float: left;
    margin-left: -27px;
}
.items .selected {
    background: #707070;
    --hole: #707070;
}
.selected .ic-symbol {
    color: #d0d0d0;
}
.library-rest {
    flex: 1;
    border-left: 1px solid #505050;
}
.library-foot {
    display: flex;
    align-items: center;
    gap: 5px;
    height: 20px;
    padding: 0 42px 2px 3px;
    border-left: 1px solid #505050;
    border-bottom: 1px solid #505050;
}
.library-foot .icon-btn:nth-child(4) {
    margin-left: 4px;
}
.foot-scroll {
    flex: 1;
}
.foot-scroll span {
    display: block;
    height: 5px;
    border-radius: 3px;
    background: #6a6a6a;
}

.taskbar {
    grid-column: 1 / -1;
    display: flex;
    justify-content: space-between;
    width: 46%;
    padding-left: 60px;
    background: #1f1f1f;
}
.strip-light {
    width: 430px;
    background: #e0e0e0;
}
.strip-grey {
    width: 61px;
    background: #555;
}
```
